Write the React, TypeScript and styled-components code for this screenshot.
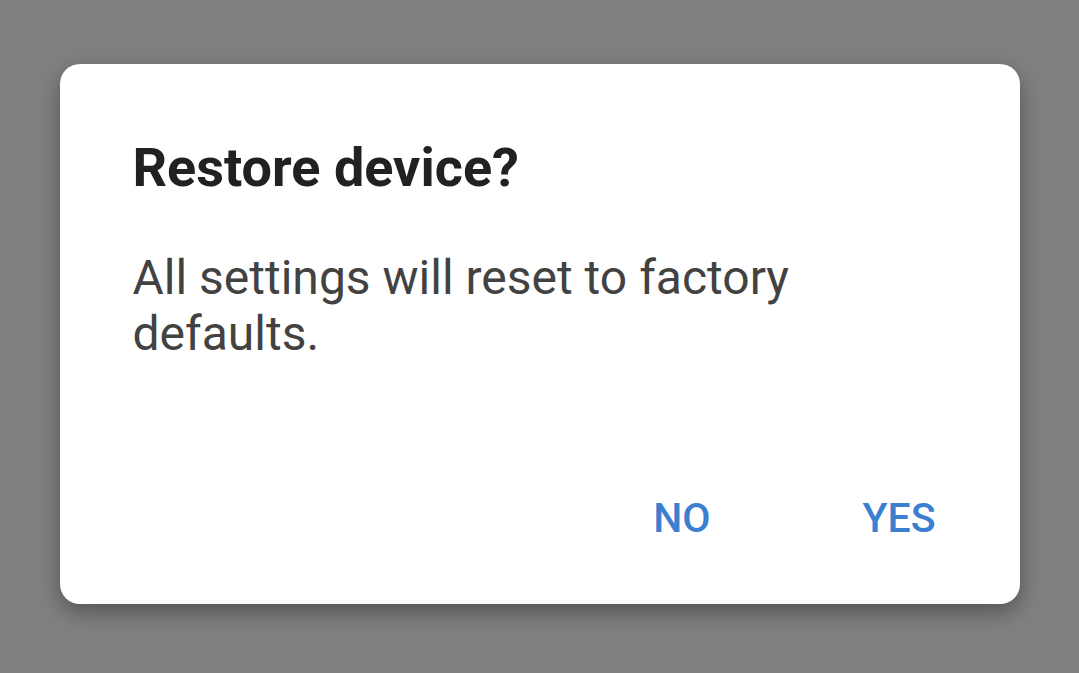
import React from "react";
import styled, { createGlobalStyle } from "styled-components";

const Global = createGlobalStyle`
  html, body { margin: 0; padding: 0; background: #808080; }
  body { font-family: Roboto, "Noto Sans", sans-serif; }
`;

const Screen = styled.div`
  width: 1079px;
  height: 673px;
  background: #808080;
  display: flex;
  justify-content: center;
  align-items: flex-start;
  padding-top: 64px;
  box-sizing: border-box;
`;

const Dialog = styled.div`
  width: 960px;
  height: 540px;
  box-sizing: border-box;
  background: #ffffff;
  border-radius: 20px;
  box-shadow: 0 8px 22px rgba(0, 0, 0, 0.35);
  display: flex;
  flex-direction: column;
  padding: 74px 60px 62px 73px;
`;

const Title = styled.h2`
  margin: 0;
  font-size: 54px;
  line-height: 60px;
  font-weight: 700;
  color: #212121;
`;

const Message = styled.p`
  margin: 52px 0 0;
  font-size: 48px;
  line-height: 56px;
  font-weight: 400;
  color: #424242;
  max-width: 700px;
`;

const Actions = styled.div`
  margin-top: auto;
  display: flex;
  justify-content: flex-end;
  gap: 104px;
`;

const ActionButton = styled.button`
  border: none;
  background: transparent;
  padding: 0 24px;
  font-family: Roboto, "Noto Sans", sans-serif;
  font-size: 41px;
  line-height: 48px;
  font-weight: 500;
  color: #3b7fd0;
  cursor: pointer;
`;

export default function App() {
  return (
    <>
      <Global />
      <Screen>
        <Dialog>
          <Title>Restore device?</Title>
          <Message>All settings will reset to factory defaults.</Message>
          <Actions>
            <ActionButton>NO</ActionButton>
            <ActionButton>YES</ActionButton>
          </Actions>
        </Dialog>
      </Screen>
    </>
  );
}
